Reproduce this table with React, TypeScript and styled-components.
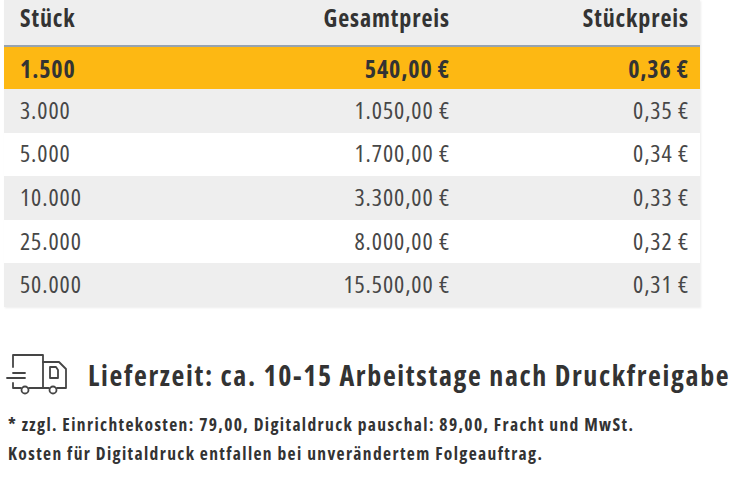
import React from 'react';
import styled, { createGlobalStyle } from 'styled-components';

const GlobalStyle = createGlobalStyle`
  html, body {
    margin: 0;
    padding: 0;
    background: #fff;
  }
  body {
    font-family: 'Open Sans', 'Liberation Sans', sans-serif;
    font-stretch: 75%;
    color: #3d3d3d;
  }
`;

interface PriceRow {
  qty: string;
  total: string;
  unit: string;
}

const prices: PriceRow[] = [
  { qty: '1.500', total: '540,00 €', unit: '0,36 €' },
  { qty: '3.000', total: '1.050,00 €', unit: '0,35 €' },
  { qty: '5.000', total: '1.700,00 €', unit: '0,34 €' },
  { qty: '10.000', total: '3.300,00 €', unit: '0,33 €' },
  { qty: '25.000', total: '8.000,00 €', unit: '0,32 €' },
  { qty: '50.000', total: '15.500,00 €', unit: '0,31 €' },
];

type RowKind = 'head' | 'active' | 'grey' | 'white';

const rowBg: Record<RowKind, string> = {
  head: '#eeeeee',
  active: '#fdb813',
  grey: '#eeeeee',
  white: '#ffffff',
};

const TruckIcon = () => (
  <TruckSvg width="64" height="44" viewBox="0 0 64 44" fill="none" stroke="#454545" strokeWidth="1.8" strokeLinecap="round" strokeLinejoin="round">
    <path d="M9 14 V2 H39 V35" />
    <path d="M39 9 H55 L62 16 V35 H53" />
    <path d="M46 14 H52 L54 17 V25 H46 Z" />
    <path d="M9 20 H21" />
    <path d="M3 25 H21" />
    <path d="M9 30 V35 H17" />
    <path d="M25 35 H45" />
    <circle cx="21" cy="37" r="3.5" />
    <circle cx="49" cy="37" r="3.5" />
  </TruckSvg>
);

export default function App() {
  return (
    <Page>
      <GlobalStyle />
      <Table>
        <Row $kind="head">
          <Cell>Stück</Cell>
          <Cell $right>Gesamtpreis</Cell>
          <Cell $right>Stückpreis</Cell>
        </Row>
        {prices.map((p, i) => (
          <Row key={p.qty} $kind={i === 0 ? 'active' : i % 2 === 1 ? 'grey' : 'white'}>
            <Cell>{p.qty}</Cell>
            <Cell $right>{p.total}</Cell>
            <Cell $right>{p.unit}</Cell>
          </Row>
        ))}
      </Table>

      <Delivery>
        <TruckIcon />
        <DeliveryText>Lieferzeit: ca. 10-15 Arbeitstage nach Druckfreigabe</DeliveryText>
      </Delivery>

      <Notes>
        <Note>* zzgl. Einrichtekosten: 79,00, Digitaldruck pauschal: 89,00, Fracht und MwSt.</Note>
        <Note>Kosten für Digitaldruck entfallen bei unverändertem Folgeauftrag.</Note>
      </Notes>
    </Page>
  );
}

const Page = styled.div`
  width: 730px;
  height: 479px;
  overflow: hidden;
`;

const Table = styled.div`
  margin-left: 4px;
  width: 696px;
  background: #eeeeee;
  box-shadow: 1px 1px 2px rgba(0, 0, 0, 0.08);
`;

const Row = styled.div<{ $kind: RowKind }>`
  display: grid;
  grid-template-columns: 220px 237px 239px;
  align-items: center;
  box-sizing: border-box;
  height: ${(p) => (p.$kind === 'head' ? '47px' : p.$kind === 'active' ? '42px' : '43.6px')};
  padding-bottom: ${(p) => (p.$kind === 'head' ? '10px' : p.$kind === 'active' ? '0' : '3px')};
  border-bottom: ${(p) => (p.$kind === 'head' ? '2px solid #97a3af' : 'none')};
  background: ${(p) => rowBg[p.$kind]};
  font-size: 24px;
  letter-spacing: 0.9px;
  font-weight: ${(p) => (p.$kind === 'head' || p.$kind === 'active' ? 700 : 400)};
  color: ${(p) => (p.$kind === 'head' || p.$kind === 'active' ? '#333333' : '#474747')};
`;

const Cell = styled.div<{ $right?: boolean }>`
  padding: ${(p) => (p.$right ? '0 11px 0 0' : '0 0 0 16px')};
  text-align: ${(p) => (p.$right ? 'right' : 'left')};
  white-space: nowrap;
`;

const Delivery = styled.div`
  display: flex;
  align-items: center;
  gap: 20px;
  margin-top: 46px;
  padding-left: 4px;
`;

const TruckSvg = styled.svg`
  flex-shrink: 0;
`;

const DeliveryText = styled.div`
  font-size: 28px;
  letter-spacing: 1.65px;
  font-weight: 700;
  color: #333333;
  white-space: nowrap;
`;

const Notes = styled.div`
  display: flex;
  flex-direction: column;
  margin-top: 13px;
  padding-left: 8px;
`;

const Note = styled.div`
  font-size: 17.5px;
  letter-spacing: 1.37px;
  font-weight: 700;
  line-height: 29px;
  color: #333333;
  white-space: nowrap;
`;
